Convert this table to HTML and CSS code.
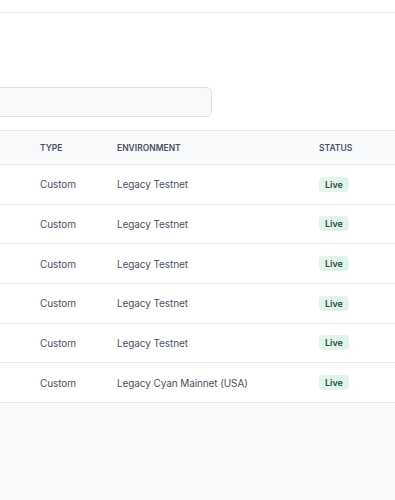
FILE: index.html
```html
<!DOCTYPE html>
<html lang="en">
<head>
<meta charset="utf-8">
<link rel="stylesheet" href="styles.css">
</head>
<body>
  <header class="topbar"></header>
  <section class="toolbar">
    <div class="search"></div>
  </section>
  <div class="table">
    <div class="row head">
      <span></span><span>Type</span><span>Environment</span><span>Status</span>
    </div>
    <div class="row"><span></span><span>Custom</span><span>Legacy Testnet</span><span><em class="pill">Live</em></span></div>
    <div class="row"><span></span><span>Custom</span><span>Legacy Testnet</span><span><em class="pill">Live</em></span></div>
    <div class="row"><span></span><span>Custom</span><span>Legacy Testnet</span><span><em class="pill">Live</em></span></div>
    <div class="row"><span></span><span>Custom</span><span>Legacy Testnet</span><span><em class="pill">Live</em></span></div>
    <div class="row"><span></span><span>Custom</span><span>Legacy Testnet</span><span><em class="pill">Live</em></span></div>
    <div class="row"><span></span><span>Custom</span><span>Legacy Cyan Mainnet (USA)</span><span><em class="pill">Live</em></span></div>
  </div>
</body>
</html>
```
FILE: styles.css
```css
html, body {
  margin: 0;
  padding: 0;
}
body {
  background: #f8f9fb;
  font-family: Inter, "Noto Sans", sans-serif;
  color: #4b5262;
  width: 395px;
  overflow: hidden;
}
.topbar {
  height: 12px;
  background: #fff;
  border-bottom: 1px solid #e8eaed;
}
.toolbar {
  background: #fff;
  padding: 74px 0 13px;
}
.search {
  width: 220px;
  height: 28px;
  margin-left: -10px;
  background: #f8f9fb;
  border: 1px solid #dcdfe4;
  border-radius: 6px;
}
.table {
  background: #fff;
  border-top: 1px solid #e8eaed;
  border-bottom: 1px solid #e8eaed;
}
.row {
  display: grid;
  grid-template-columns: 40px 77px 202px 1fr;
  align-items: center;
  height: 38.67px;
  border-bottom: 1px solid #e8eaed;
  font-size: 10px;
  letter-spacing: -0.1px;
}
.row:last-child {
  border-bottom: 0;
}
.row.head {
  height: 33px;
  background: #f8f9fb;
  font-size: 8.5px;
  font-weight: 600;
  letter-spacing: 0;
  text-transform: uppercase;
  color: #4b5262;
}
.pill {
  display: inline-block;
  font-style: normal;
  font-size: 9px;
  font-weight: 600;
  letter-spacing: 0;
  color: #1e4d34;
  background: #e2f5ec;
  border-radius: 4px;
  padding: 2px 6px;
  line-height: 11px;
}
```
